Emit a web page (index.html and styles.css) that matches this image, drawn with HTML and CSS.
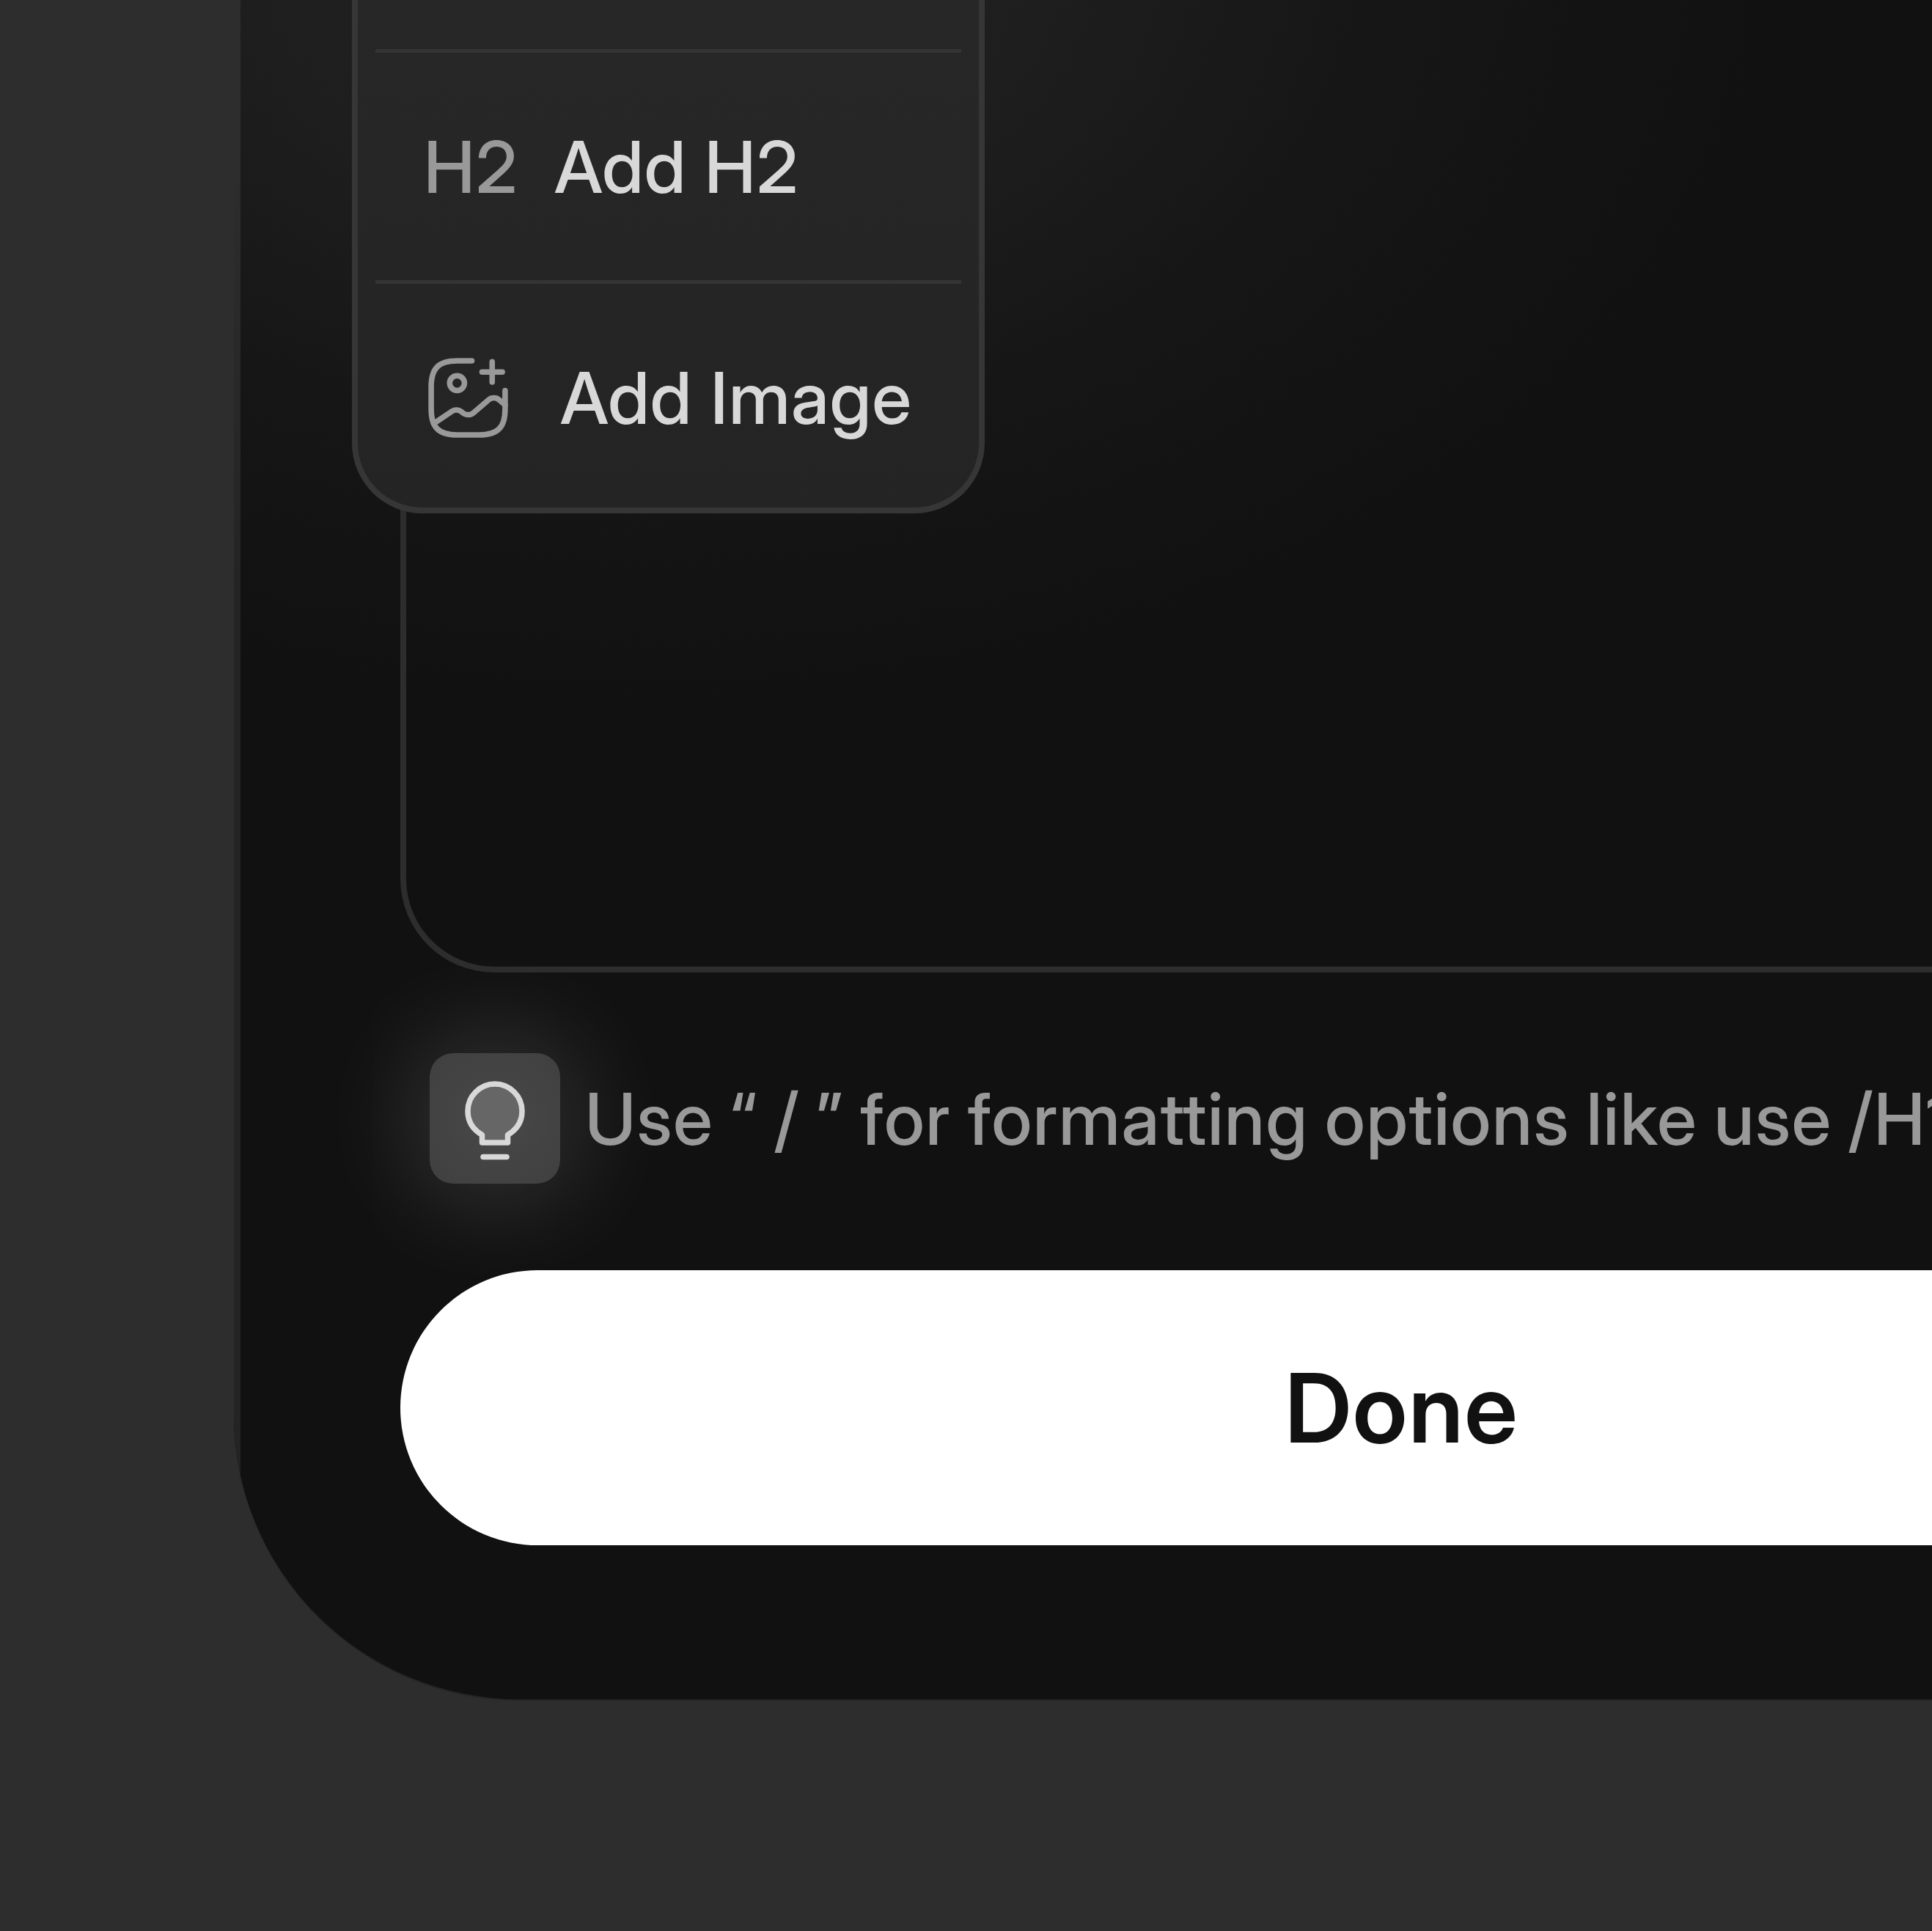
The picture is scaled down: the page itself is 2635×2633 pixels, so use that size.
FILE: index.html
```html
<!DOCTYPE html>
<html lang="en">
  <head>
    <meta charset="utf-8" />
    <title>Editor</title>
    <link rel="stylesheet" href="styles.css">
  </head>
  <body>
    <div class="modal">
      <div class="editor">
        <div class="menu">
          <div class="menu-item">
            <span class="menu-icon">H2</span>
            <span>Add H2</span>
          </div>
          <div class="menu-item">
            <svg class="image-icon" viewBox="0 0 24 24">
              <path d="M13 2H9C4 2 2 4 2 9v6c0 5 2 7 7 7h6c5 0 7-2 7-7v-5" />
              <circle cx="9" cy="8" r="2" />
              <path d="M15.750 5h5.500M18.500 7.750v-5.500" />
              <path d="M2.670 18.950l4.930-3.310c.79-.53 1.930-.47 2.640.14l.33.29c.78.67 2.040.67 2.820 0l4.160-3.570c.78-.67 2.040-.67 2.820 0L22 13.900" />
            </svg>
            <span>Add Image</span>
          </div>
        </div>
      </div>
      <div class="hint">
        <div class="hint-icon">
          <svg class="bulb" viewBox="0 0 178 178">
            <path class="bulb-glass" d="M71.500 122v-10.500c-12-7-19.500-18-19.500-32.500a37 37 0 0 1 74 0c0 14.500-7.500 25.500-19.500 32.500v10.500z" />
            <path d="M73 141.500h32" />
          </svg>
        </div>
        <span>Use “ / ” for formatting options like use /H1</span>
      </div>
      <button class="done">Done</button>
    </div>
  </body>
</html>
```
FILE: styles.css
```css
* {
  box-sizing: border-box;
}
body {
  margin: 0;
  height: 2633px;
  overflow: hidden;
  background: #2d2d2d;
  font-family: "Inter Display", Inter, sans-serif;
}
.modal {
  width: 3186px;
  height: 2319px;
  margin-left: 319px;
  padding: 0 227px;
  background:
    linear-gradient(#2d2d2d, #2d2d2d 200px, #242424 800px) left / 9px 100% no-repeat,
    radial-gradient(ellipse 1550px 1020px at 560px -60px, #222 0, #1e1e1e 35%, #161616 65%, #111 100%),
    #111;
  border-bottom: 2px solid #252525;
  border-radius: 0 0 390px 390px;
}
.editor {
  position: relative;
  height: 1326px;
  border: 8px solid #2d2d2d;
  border-top: 0;
  border-radius: 0 0 128px 128px;
}
.menu {
  position: absolute;
  top: 0;
  left: -74px;
  width: 863px;
  height: 700px;
  padding: 67px 24px 0;
  background: linear-gradient(#272727, #242424);
  border: 8px solid #363636;
  border-top: 0;
  border-radius: 0 0 96px 96px;
}
.menu-item {
  display: flex;
  align-items: center;
  height: 315px;
  padding-left: 66px;
  border-top: 5px solid #343434;
  color: #d8d8d8;
  font-size: 98px;
  font-weight: 500;
  letter-spacing: 1.2px;
}
.menu-icon {
  width: 178px;
  color: #999;
}
.image-icon {
  width: 121px;
  height: 121px;
  margin-right: 65px;
  fill: none;
  stroke: #999;
  stroke-width: 1.5;
  stroke-linecap: round;
  stroke-linejoin: round;
}
.hint {
  display: flex;
  align-items: center;
  gap: 34px;
  height: 178px;
  margin: 110px 0 118px 40px;
  color: #999;
  font-size: 98px;
  font-weight: 500;
  letter-spacing: 1.6px;
  word-spacing: -2.5px;
  white-space: nowrap;
}
.hint-icon {
  flex: none;
  width: 178px;
  height: 178px;
  background: radial-gradient(circle, #484848, #404040 120px);
  border-radius: 32px;
  box-shadow: 0 0 150px 10px rgba(255, 255, 255, 0.18);
}
.bulb {
  display: block;
  fill: none;
  stroke: #d8d8d8;
  stroke-width: 7.5;
  stroke-linecap: round;
  stroke-linejoin: round;
}
.bulb-glass {
  fill: #666;
}
.done {
  display: block;
  width: 100%;
  height: 375px;
  background: #fff;
  border: 0;
  border-radius: 188px;
  color: #111;
  font-family: inherit;
  font-size: 130px;
  font-weight: 600;
  letter-spacing: 2px;
}
```
